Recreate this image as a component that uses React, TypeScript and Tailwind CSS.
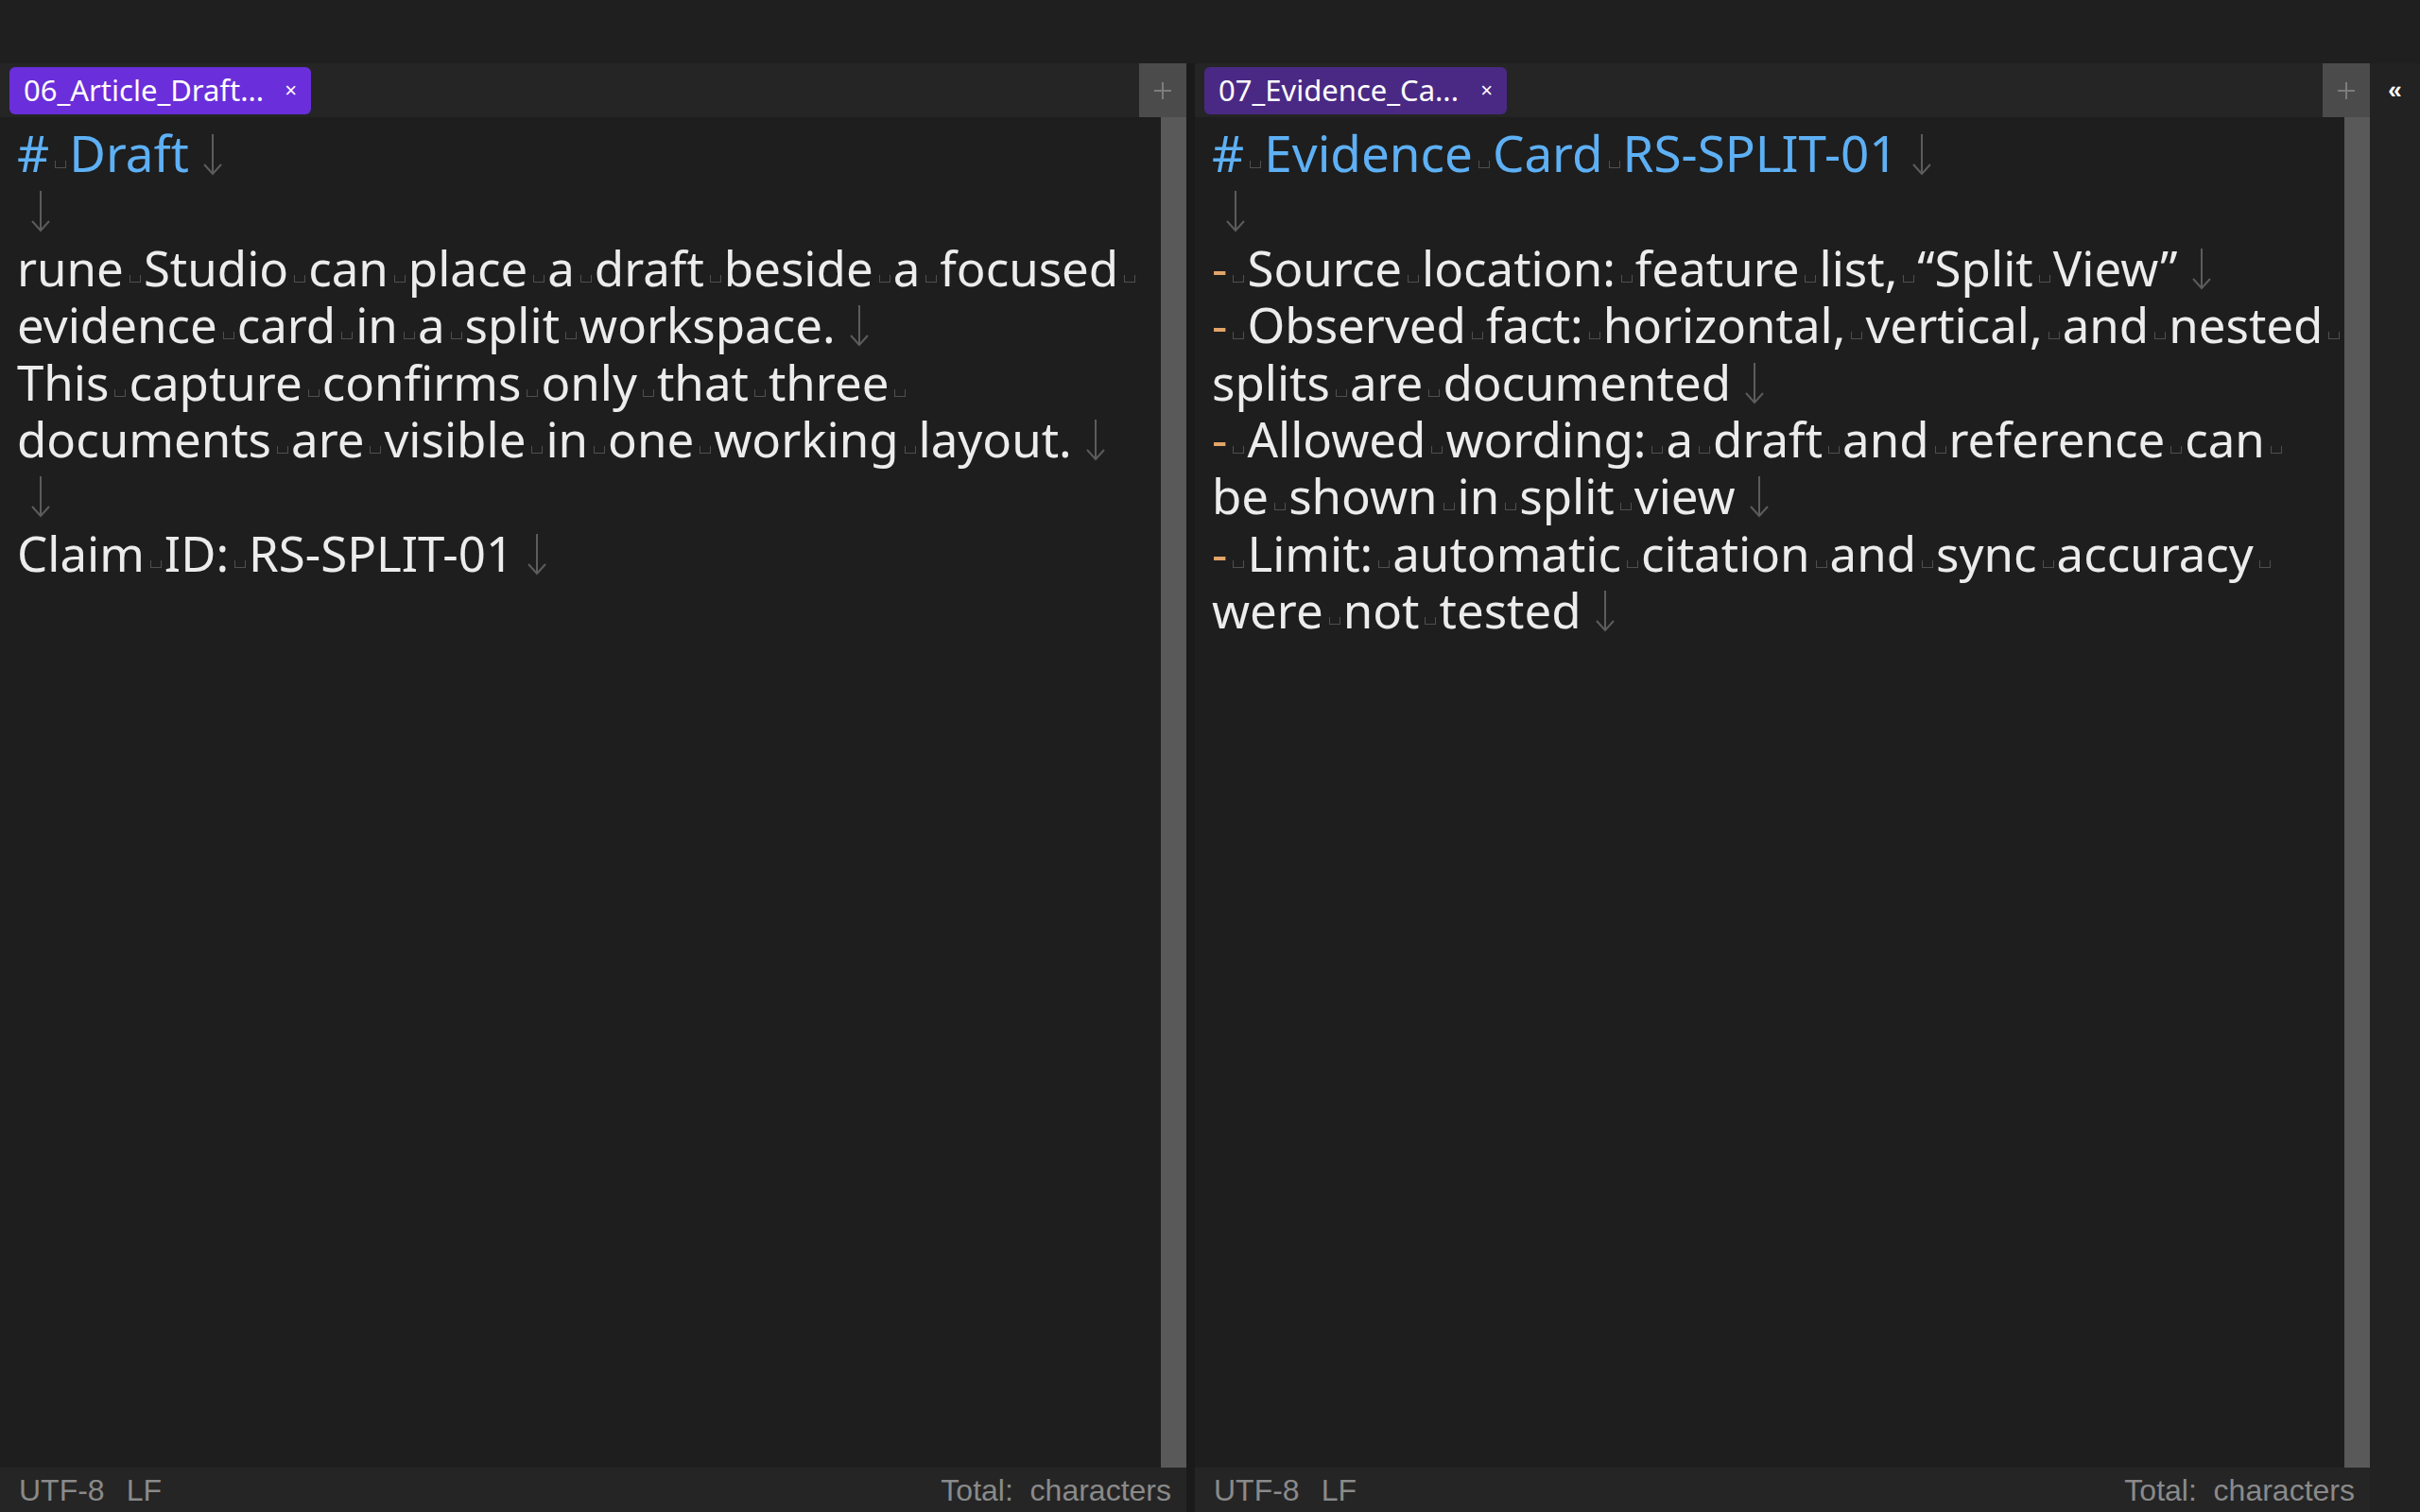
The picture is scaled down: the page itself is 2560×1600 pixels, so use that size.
import type { ReactNode } from "react";

type Seg = [string, string?];

interface EditorLine {
  segs: Seg[];
  ret?: boolean;
  heading?: boolean;
}

const BLUE = "text-[#5eb0f5]";
const ORANGE = "text-[#e2a468]";

const leftLines: EditorLine[] = [
  { segs: [["# Draft", BLUE]], ret: true, heading: true },
  { segs: [], ret: true },
  { segs: [["rune Studio can place a draft beside a focused "]] },
  { segs: [["evidence card in a split workspace."]], ret: true },
  { segs: [["This capture confirms only that three "]] },
  { segs: [["documents are visible in one working layout."]], ret: true },
  { segs: [], ret: true },
  { segs: [["Claim ID: RS-SPLIT-01"]], ret: true },
];

const rightLines: EditorLine[] = [
  { segs: [["# Evidence Card RS-SPLIT-01", BLUE]], ret: true, heading: true },
  { segs: [], ret: true },
  { segs: [["-", ORANGE], [" Source location: feature list, \u201cSplit View\u201d"]], ret: true },
  { segs: [["-", ORANGE], [" Observed fact: horizontal, vertical, and nested "]] },
  { segs: [["splits are documented"]], ret: true },
  { segs: [["-", ORANGE], [" Allowed wording: a draft and reference can "]] },
  { segs: [["be shown in split view"]], ret: true },
  { segs: [["-", ORANGE], [" Limit: automatic citation and sync accuracy "]] },
  { segs: [["were not tested"]], ret: true },
];

// visible whitespace marker
const Space = () => (
  <span className="inline-block w-[12px] h-[8px] border border-t-0 border-[#4f4f4f] ml-[6px] mr-[3px] align-[4px]" />
);

// line-break marker
const Return = () => (
  <svg
    className="inline-block ml-[14px] align-[-4px]"
    width="22"
    height="45"
    viewBox="0 0 22 45"
  >
    <path d="M11 1v42M2 33l9 10 9-10" stroke="#5c5c5c" strokeWidth="2" fill="none" />
  </svg>
);

const renderSeg = (seg: Seg, si: number) => {
  const parts = seg[0].split(" ");
  const out: ReactNode[] = [];
  parts.forEach((p, i) => {
    if (i > 0) out.push(<Space key={`s${si}-${i}`} />);
    if (p) out.push(<span key={`t${si}-${i}`}>{p}</span>);
  });
  return (
    <span key={si} className={seg[1] ?? "text-[#ececec]"}>
      {out}
    </span>
  );
};

const Editor = ({ lines }: { lines: EditorLine[] }) => (
  <div className="flex-1 pl-[18px] pt-[8px] font-['Noto_Sans',sans-serif] text-[51px] leading-[60.4px]">
    {lines.map((line, i) => (
      <div
        key={i}
        className={`whitespace-nowrap h-[60.4px] ${line.heading ? "text-[53px]" : ""}`}
      >
        {line.segs.map(renderSeg)}
        {line.ret && <Return />}
      </div>
    ))}
  </div>
);

const Tab = ({ title, bg, width }: { title: string; bg: string; width: string }) => (
  <div
    className={`${bg} ${width} h-[50px] rounded-[6px] flex items-center justify-between pl-[15px] pr-[15px] text-white`}
  >
    <span className="font-['Noto_Sans',sans-serif] text-[31px] leading-none">{title}</span>
    <span className="font-['Liberation_Sans',sans-serif] text-[22px] leading-none">×</span>
  </div>
);

const Plus = () => (
  <div className="w-[50px] bg-[#4b4b4b] flex items-center justify-center">
    <svg width="18" height="18" viewBox="0 0 18 18">
      <path d="M9 0v18M0 9h18" stroke="#7c7c7c" strokeWidth="2" />
    </svg>
  </div>
);

const Pane = ({
  lines,
  tab,
  tabBg,
  tabWidth,
  width,
}: {
  lines: EditorLine[];
  tab: string;
  tabBg: string;
  tabWidth: string;
  width: string;
}) => (
  <div className={`${width} flex flex-col`}>
    <div className="h-[57px] flex">
      <div className="flex-1 bg-[#252525] flex items-center pl-[10px]">
        <Tab title={tab} bg={tabBg} width={tabWidth} />
      </div>
      <Plus />
    </div>
    <div className="flex-1 flex bg-[#1e1e1e]">
      <Editor lines={lines} />
      <div className="w-[27px] bg-[#595959]" />
    </div>
    <div className="h-[47px] bg-[#252525] flex items-center justify-between pl-[20px] pr-[16px] font-['Liberation_Sans',sans-serif] text-[32px] text-[#8a8a8a]">
      <div className="flex gap-[23px]">
        <span>UTF-8</span>
        <span>LF</span>
      </div>
      <span className="whitespace-pre">Total:  characters</span>
    </div>
  </div>
);

export default function App() {
  return (
    <div className="w-[2560px] h-[1600px] flex flex-col bg-[#1e1e1e] overflow-hidden">
      <div className="h-[67px] bg-[#1f1f1f]" />
      <div className="flex-1 flex">
        <Pane
          lines={leftLines}
          tab="06_Article_Draft..."
          tabBg="bg-[#6a2edb]"
          tabWidth="w-[319px]"
          width="w-[1255px]"
        />
        <div className="w-[9px] bg-[#1a1a1a]" />
        <Pane
          lines={rightLines}
          tab="07_Evidence_Ca..."
          tabBg="bg-[#4a2984]"
          tabWidth="w-[320px]"
          width="w-[1243px]"
        />
        <div className="flex-1 bg-[#222222] flex flex-col">
          <div className="h-[57px] flex items-center justify-center text-white font-bold text-[26px] font-['Liberation_Sans',sans-serif]">
            «
          </div>
        </div>
      </div>
    </div>
  );
}
